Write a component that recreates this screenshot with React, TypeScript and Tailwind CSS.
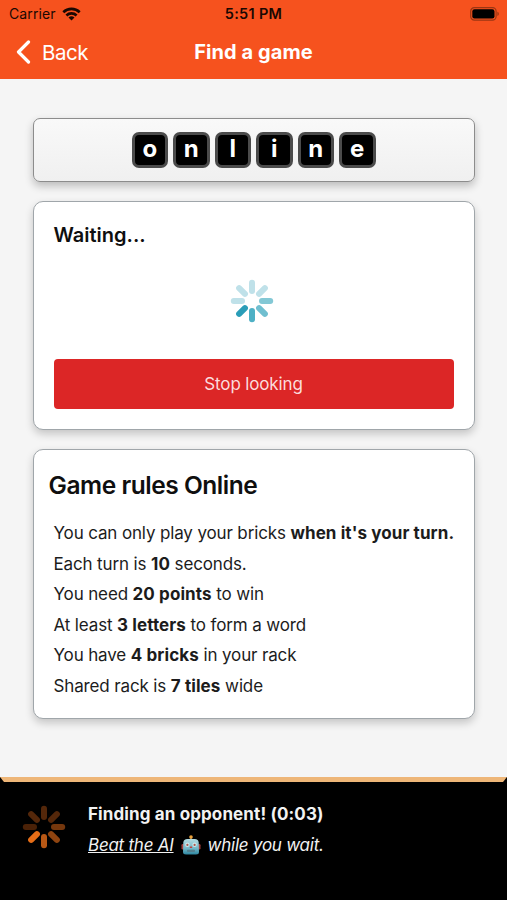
import type { ReactNode } from "react";

const LETTERS = ["o", "n", "l", "i", "n", "e"];

const BLUE = ["#bfe1e9", "#bfe1e9", "#83c8d5", "#70bfd0", "#4db0c5", "#2a9db8", "#bfe1e9", "#bfe1e9"];
const ORANGE = ["#54270a", "#54270a", "#75370d", "#8f4410", "#b95815", "#e56d17", "#4a2107", "#54270a"];

function Spinner({ colors }: { colors: string[] }) {
  return (
    <svg width="44" height="44" viewBox="-22 -22 44 44" className="block shrink-0">
      {colors.map((color, i) => (
        <line
          key={i}
          x1="0"
          y1="-18.2"
          x2="0"
          y2="-10"
          stroke={color}
          strokeWidth="6"
          strokeLinecap="round"
          transform={`rotate(${i * 45})`}
        />
      ))}
    </svg>
  );
}

function Wifi() {
  return (
    <svg width="19" height="14" viewBox="0 0 19 14" className="block" fill="none" stroke="#1a0802" strokeWidth="2.6">
      <path d="M1.3 5.2a11.7 11.7 0 0 1 16.4 0" />
      <path d="M4.4 8.5a7.3 7.3 0 0 1 10.2 0" />
      <path d="M9.5 13.6 6.5 10.6a4.3 4.3 0 0 1 6 0z" fill="#1a0802" stroke="none" />
    </svg>
  );
}

function Battery() {
  return (
    <svg width="30" height="14" viewBox="0 0 30 14" className="block">
      <rect x="0.7" y="0.7" width="25.4" height="12.4" rx="3.6" fill="none" stroke="#9b3613" strokeWidth="1.2" />
      <rect x="2.3" y="2.3" width="22.2" height="9.2" rx="2.2" fill="#000" />
      <path d="M27.4 4.8c1.9.6 1.9 3.6 0 4.2z" fill="#9b3613" />
    </svg>
  );
}

function Robot() {
  return (
    <svg width="20" height="20" viewBox="0 0 19 20" className="block">
      <defs>
        <linearGradient id="head" x1="0" y1="0" x2="0" y2="1">
          <stop offset="0" stopColor="#b4dce2" />
          <stop offset="0.6" stopColor="#74b9c9" />
          <stop offset="1" stopColor="#2d86a0" />
        </linearGradient>
      </defs>
      <rect x="0" y="9" width="3" height="5.5" rx="1.3" fill="#a33e3a" />
      <rect x="16" y="9" width="3" height="5.5" rx="1.3" fill="#a33e3a" />
      <rect x="8.5" y="2" width="2" height="3" fill="#8a6a3a" />
      <circle cx="9.5" cy="2" r="1.8" fill="#e9a13c" />
      <path d="M1.8 7.5Q2 4 6 4h7q4 0 4.2 3.5L17.5 17q0 2.5-3 2.5h-10q-3 0-3-2.5z" fill="url(#head)" />
      <circle cx="5.9" cy="9.7" r="2.2" fill="#cfe8ea" />
      <circle cx="13.1" cy="9.7" r="2.2" fill="#cfe8ea" />
      <circle cx="5.9" cy="9.9" r="1.1" fill="#a9594f" />
      <circle cx="13.1" cy="9.9" r="1.1" fill="#a9594f" />
      <path d="M9.5 10.8 11 13H8z" fill="#c2403c" />
      <rect x="5.5" y="14.8" width="8" height="2.2" rx="0.8" fill="#54808e" />
    </svg>
  );
}

function Card({ className, children }: { className: string; children: ReactNode }) {
  return (
    <section
      className={`w-[442px] rounded-[10px] border border-[#a0a6aa] bg-white shadow-[0_4px_8px_rgba(0,0,0,0.2)] ${className}`}
    >
      {children}
    </section>
  );
}

function Rule({ children }: { children: ReactNode }) {
  return <li className="h-[30.5px] whitespace-nowrap">{children}</li>;
}

function Strong({ children }: { children: ReactNode }) {
  return <b className="font-bold tracking-[0.1px]">{children}</b>;
}

export default function App() {
  return (
    <div className="flex h-[900px] w-[507px] flex-col overflow-hidden bg-[#f5f5f5] font-['Inter',sans-serif] text-[#1c1c1c]">
      <header className="h-[79px] shrink-0 bg-[#f6521e]">
        <div className="grid h-[27px] grid-cols-3 items-center text-[14px] leading-[27px] text-[#1a0802]">
          <div className="flex items-center gap-[6px] pl-[9px]">
            <span className="tracking-[0.1px]">Carrier</span>
            <Wifi />
          </div>
          <div className="text-center text-[14.5px] font-semibold tracking-[0.3px]">5:51 PM</div>
          <div className="flex justify-end pr-[7px]">
            <Battery />
          </div>
        </div>
        <div className="grid h-[50px] grid-cols-[1fr_auto_1fr] items-center text-white">
          <div className="flex items-center gap-[11px] pl-[16px]">
            <svg width="15" height="24" viewBox="0 0 15 24" className="block" fill="none" stroke="#fff" strokeWidth="3.2" strokeLinecap="round" strokeLinejoin="round">
              <path d="M12.5 2 2.5 12l10 10" />
            </svg>
            <span className="pt-[2px] text-[20.5px] tracking-[-0.5px]">Back</span>
          </div>
          <h1 className="text-[20px] font-bold tracking-[0.08px]">Find a game</h1>
          <div />
        </div>
      </header>

      <main className="flex flex-1 flex-col items-center pt-[39px]">
        <div className="flex h-16 w-[442px] items-center justify-center gap-[5px] rounded-[7px] border border-[#8c8c8c] bg-linear-to-b from-[#f9f9f9] to-[#f0f0f0] shadow-[0_4px_8px_rgba(0,0,0,0.24)]">
          {LETTERS.map((letter, i) => (
            <span
              key={i}
              className="flex h-[36.5px] w-[36.5px] justify-center rounded-[7px] border-[3.5px] border-[#4b4b4b] bg-black text-[24px] leading-[28px] font-bold text-white"
            >
              {letter}
            </span>
          ))}
        </div>

        <Card className="mt-[19px] h-[229px] px-5 pt-[19px]">
          <h2 className="text-[20px] leading-[28px] font-semibold tracking-[0px] text-[#0f0f0f]">Waiting...</h2>
          <div className="mt-[30px] flex justify-center pr-[3px]">
            <Spinner colors={BLUE} />
          </div>
          <button className="mt-[36px] block h-[50px] w-full rounded-[4px] bg-[#dc2626] pt-[2px] text-[17px] tracking-[-0.15px] text-[#fbdcdc]">
            Stop looking
          </button>
        </Card>

        <Card className="mt-[19px] h-[270px] pt-[17px]">
          <h2 className="pl-[15px] text-[24.5px] leading-[36px] font-semibold tracking-[-0.45px] text-[#0f0f0f]">Game rules Online</h2>
          <ul className="mt-[15.4px] pl-5 text-[17px] leading-[30.5px] tracking-[-0.14px]">
            <Rule>You can only play your bricks <Strong>when it's your turn.</Strong></Rule>
            <Rule>Each turn is <Strong>10</Strong> seconds.</Rule>
            <Rule>You need <Strong>20 points</Strong> to win</Rule>
            <Rule>At least <Strong>3 letters</Strong> to form a word</Rule>
            <Rule>You have <Strong>4 bricks</Strong> in your rack</Rule>
            <Rule>Shared rack is <Strong>7 tiles</Strong> wide</Rule>
          </ul>
        </Card>
      </main>

      <footer className="h-[123px] shrink-0 bg-black">
        <div className="flex h-full border-t-[5px] border-r-[4px] border-l-[4px] border-t-[#eeb678] border-r-black border-l-black pt-[17px] pl-[18px] text-[#f2f2f2]">
          <div className="pt-[6px]">
            <Spinner colors={ORANGE} />
          </div>
          <div className="pl-[22px] text-[17px] leading-[30.5px]">
            <p className="font-bold tracking-[0.12px]">Finding an opponent! (0:03)</p>
            <p className="flex items-center tracking-[-0.24px] italic">
              <a className="underline">Beat the AI</a>
              <span className="mx-[7px]"><Robot /></span>
              <span>while you wait.</span>
            </p>
          </div>
        </div>
      </footer>
    </div>
  );
}
